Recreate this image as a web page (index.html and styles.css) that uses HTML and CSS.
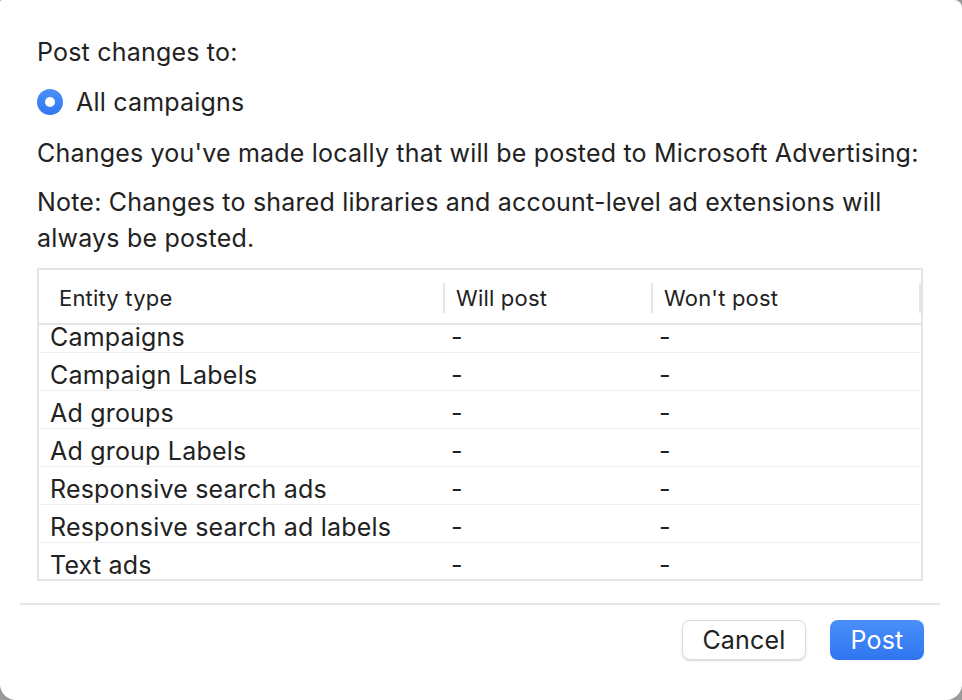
FILE: index.html
```html
<!DOCTYPE html>
<html lang="en">
<head>
    <meta charset="UTF-8">
    <title>Post changes</title>
    <link rel="stylesheet" href="styles.css">
</head>
<body>
    <div class="dialog">
        <div class="content">
            <p class="label">Post changes to:</p>
            <label class="radio-row">
                <span class="radio"></span>
                <span>All campaigns</span>
            </label>
            <p class="info">Changes you've made locally that will be posted to Microsoft Advertising:</p>
            <p class="note">Note: Changes to shared libraries and account-level ad extensions will always be posted.</p>

            <div class="table">
                <div class="thead">
                    <div class="th first">Entity type</div>
                    <div class="th">Will post</div>
                    <div class="th">Won't post</div>
                    <div class="th last"></div>
                </div>
                <div class="tbody">
                    <div class="row"><span class="name">Campaigns</span><span>-</span><span>-</span></div>
                    <div class="row"><span class="name">Campaign Labels</span><span>-</span><span>-</span></div>
                    <div class="row"><span class="name">Ad groups</span><span>-</span><span>-</span></div>
                    <div class="row"><span class="name">Ad group Labels</span><span>-</span><span>-</span></div>
                    <div class="row"><span class="name">Responsive search ads</span><span>-</span><span>-</span></div>
                    <div class="row"><span class="name">Responsive search ad labels</span><span>-</span><span>-</span></div>
                    <div class="row"><span class="name">Text ads</span><span>-</span><span>-</span></div>
                </div>
            </div>
        </div>

        <div class="footer">
            <button class="btn cancel">Cancel</button>
            <button class="btn post">Post</button>
        </div>
    </div>
</body>
</html>
```

FILE: styles.css
```css
html, body {
    margin: 0;
    height: 100%;
}
body {
    background: #9a9a9a;
    font-family: Inter, "Open Sans", sans-serif;
    font-size: 25px;
    letter-spacing: 0.2px;
    color: #222;
}
.dialog {
    width: 962px;
    height: 700px;
    background: #fff;
    border-radius: 2px 8px 16px 16px;
    overflow: hidden;
}
.content {
    padding: 34px 39px 0 37px;
}
p {
    margin: 0;
    line-height: 36px;
}
.radio-row {
    display: flex;
    align-items: center;
    gap: 13px;
    height: 36px;
    margin-top: 14px;
}
.radio {
    width: 26px;
    height: 26px;
    border-radius: 50%;
    background: linear-gradient(#4b90fa, #2f78f2);
    display: flex;
    align-items: center;
    justify-content: center;
}
.radio::after {
    content: "";
    width: 10px;
    height: 10px;
    border-radius: 50%;
    background: #fff;
}
.info {
    margin-top: 15px;
}
.note {
    margin-top: 13px;
}
.table {
    margin-top: 12px;
    width: 882px;
    border: 2px solid #e4e4e4;
}
.thead {
    display: grid;
    grid-template-columns: 404px 208px 268px 2px;
    align-items: center;
    padding-top: 3px;
    box-sizing: border-box;
    height: 55px;
    border-bottom: 2px solid #e4e4e4;
    font-size: 22px;
}
.th {
    height: 30px;
    line-height: 30px;
    padding-left: 11px;
    border-left: 2px solid #e6e6e6;
}
.th.first {
    padding-left: 20px;
    border-left: none;
}
.th.last {
    padding: 0;
}
.row {
    display: grid;
    grid-template-columns: 404px 208px 1fr;
    height: 38px;
    box-sizing: border-box;
    padding-top: 8px;
    line-height: 28px;
    border-bottom: 1px solid #efefef;
}
.row:first-child {
    height: 28px;
    padding-top: 0;
    line-height: 24px;
}
.row:last-child {
    height: 36px;
    border-bottom: none;
}
.row span {
    padding-left: 8px;
}
.row .name {
    padding-left: 11px;
}
.footer {
    margin: 22px 22px 0 20px;
    border-top: 2px solid #e6e6e6;
    display: flex;
    justify-content: flex-end;
    gap: 24px;
    padding: 15px 16px 0 0;
}
.btn {
    height: 40px;
    border-radius: 8px;
    font-family: inherit;
    font-size: 25px;
    letter-spacing: 0.2px;
    cursor: pointer;
}
.cancel {
    width: 124px;
    background: #fff;
    color: #222;
    border: 1px solid #dcdcdc;
    box-shadow: 0 1px 2px rgba(0, 0, 0, 0.15);
}
.post {
    width: 94px;
    background: linear-gradient(#4a8ff9, #2f75f0);
    color: #fff;
    border: none;
}
```
